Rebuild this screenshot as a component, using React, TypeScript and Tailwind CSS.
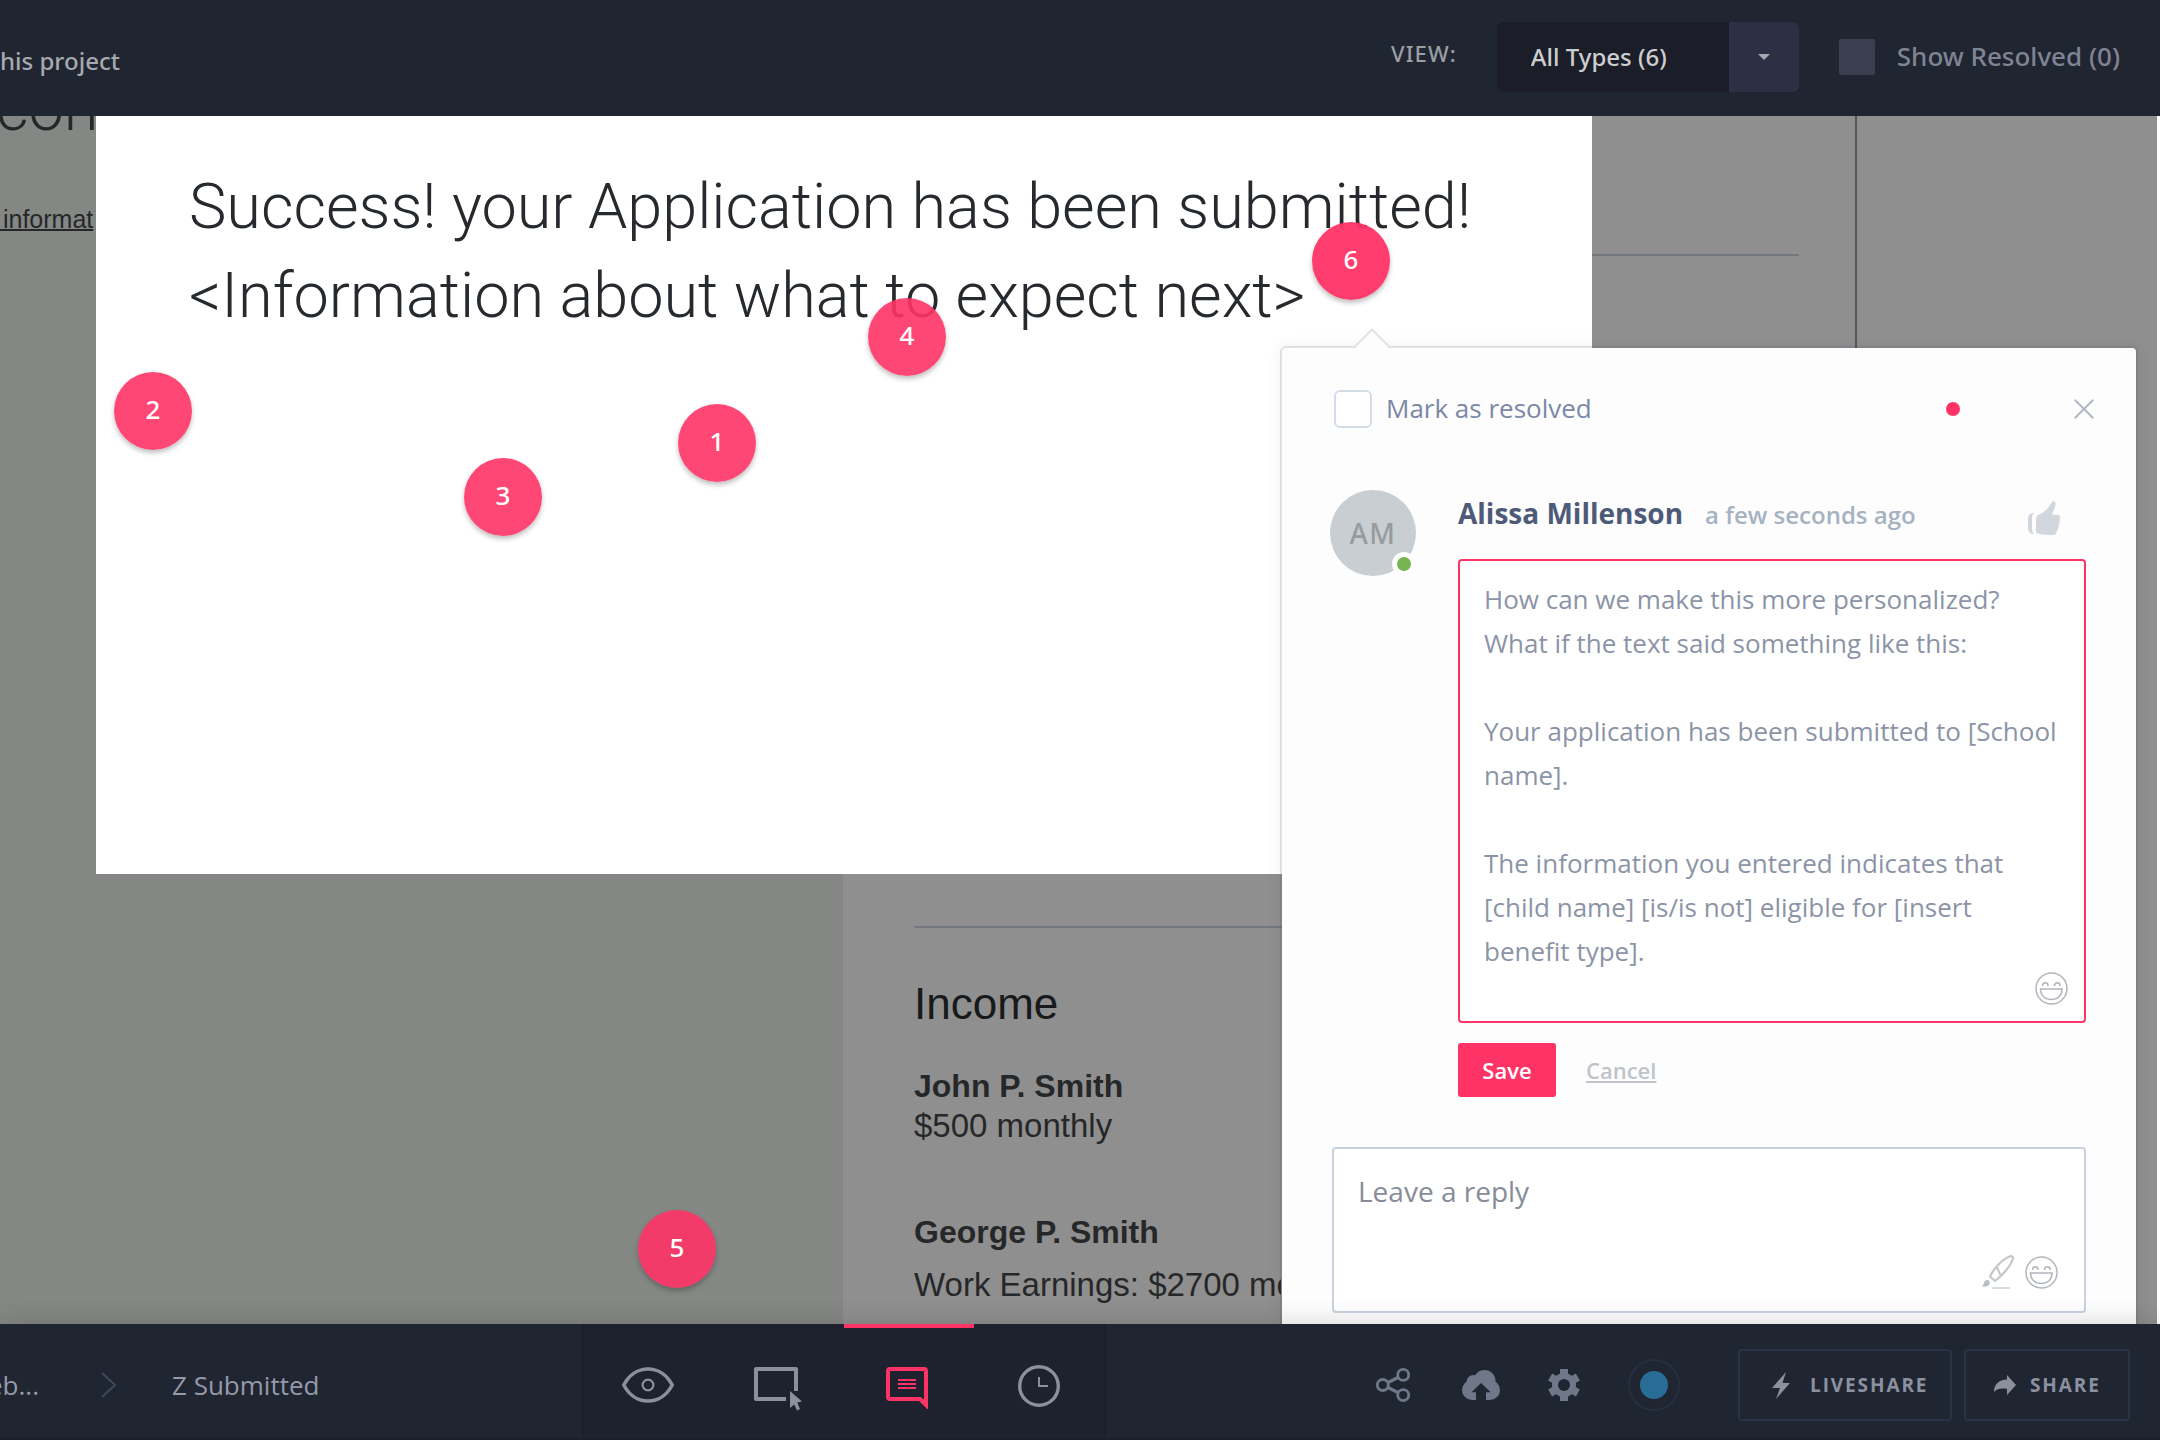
import React from "react";

const message = `How can we make this more personalized?
What if the text said something like this:

Your application has been submitted to [School name].

The information you entered indicates that [child name] [is/is not] eligible for [insert benefit type].`;

const pins = [
  { n: 1, place: "left-[678px] top-[288px]", tone: "bg-[#ff3366]/90" },
  { n: 2, place: "left-[114px] top-[256px]", tone: "bg-[#ff3366]/90" },
  { n: 3, place: "left-[464px] top-[342px]", tone: "bg-[#ff3366]/90" },
  { n: 4, place: "left-[868px] top-[182px]", tone: "bg-[#ff3366]/90" },
  { n: 5, place: "left-[638px] top-[1094px]", tone: "bg-[#ff3366]/90" },
  { n: 6, place: "left-[1312px] top-[106px]", tone: "bg-[#ff3366]/95" },
];

function Smile() {
  return (
    <svg width="33" height="33" viewBox="0 0 33 33" fill="none" stroke="#b1b6bd" strokeWidth="1.5" aria-hidden="true">
      <circle cx="16.5" cy="16.5" r="15.5" />
      <path d="M7.5 14c0-4.4 5.6-4.4 5.6 0M19.6 14c0-4.4 5.6-4.4 5.6 0" />
      <path d="M5.5 17h21.6c0 6.600-4.600 10.600-10.800 10.600S5.500 23.600 5.500 17Z" />
    </svg>
  );
}

function Brush() {
  return (
    <svg width="32" height="34" viewBox="0 0 32 34" fill="none" aria-hidden="true">
      <path d="M8 21.500C11.500 14 20 4.500 27.500 1.500c2.600-1 4 .4 3.200 3C28 12 19.500 21 13 26Z" stroke="#c3c7ca" strokeWidth="2.200" strokeLinejoin="round" />
      <path d="M15 12.500l3.500 7.500" stroke="#c3c7ca" strokeWidth="2" />
      <path d="M0 31.500c2-1.500 1.500-4.500 3.500-6 2.400-1.500 5 1 4.200 3.500C6.700 31.500 3 32.300 0 31.500Z" fill="#b9bfc3" />
      <path d="M10 33h18" stroke="#dadcde" strokeWidth="2" />
    </svg>
  );
}

function Header() {
  return (
    <header className="z-20 flex h-[116px] shrink-0 items-center justify-between bg-[#202532] pr-10 pb-[2px]">
      <p className="pt-2 font-['Noto_Sans',sans-serif] text-[24px] font-medium text-[#a6a9ae]">his project</p>
      <div className="flex items-center">
        <label htmlFor="types" className="pr-10 pb-2 font-['Noto_Sans',sans-serif] text-[22px] font-medium tracking-wider text-[#9b9ea3]">VIEW:</label>
        <div className="relative">
          <select
            id="types"
            className="h-[70px] w-[302px] appearance-none rounded-md bg-[#1b1e29] pr-[70px] pl-[34px] font-['Noto_Sans',sans-serif] text-[24px] font-medium text-[#cdced0]"
          >
            <option>All Types (6)</option>
          </select>
          <span className="pointer-events-none absolute inset-y-0 right-0 flex w-[70px] items-center justify-center rounded-r-md bg-[#2b3045]">
            <svg width="12" height="6" viewBox="0 0 12 6" aria-hidden="true"><path d="M0 0h12L6 6Z" fill="#a4a7ae" /></svg>
          </span>
        </div>
        <input id="resolved" type="checkbox" className="ml-10 size-9 appearance-none rounded-[2px] bg-[#3a4050]" />
        <label htmlFor="resolved" className="pb-0.5 pl-[22px] font-['Noto_Sans',sans-serif] text-[26px] font-medium text-[#7f8492]">Show Resolved (0)</label>
      </div>
    </header>
  );
}

function Backdrop() {
  return (
    <div className="absolute inset-0 flex font-['Liberation_Sans',Arial,sans-serif] text-[#262728]">
      <div className="w-[843px] shrink-0 overflow-hidden bg-[#858785]">
        <p className="-mt-[52px] -ml-1 font-['Roboto',sans-serif] text-[63px] leading-[89px] font-light">con</p>
        <div className="mt-[51px] -ml-[4px] w-[100px] overflow-hidden text-[25px] leading-[30px] whitespace-pre">
          <span className="underline decoration-2 underline-offset-1"> informat</span>
        </div>
      </div>
      <div className="mr-[3px] flex-1 overflow-hidden bg-[#8f8f8f]">
        <div className="flex h-full w-[1014px] flex-col border-r-2 border-[#555759] pr-14 pl-[71px]">
          <hr className="mt-[138px] border-t-2 border-[#72787d]" />
          <hr className="mt-[670px] border-t-2 border-[#72787d]" />
          <h2 className="mt-[51px] text-[44px] leading-[50px] text-[#17191a]">Income</h2>
          <h3 className="mt-[37px] text-[32px] leading-[40px] font-bold">John P. Smith</h3>
          <p className="text-[33px] leading-[40px]">$500 monthly</p>
          <h3 className="mt-[66px] text-[32px] leading-[40px] font-bold">George P. Smith</h3>
          <p className="mt-[13px] w-[367px] overflow-hidden text-[33px] leading-[40px] whitespace-nowrap">Work Earnings: $2700 mo</p>
        </div>
      </div>
    </div>
  );
}

function CommentPanel() {
  return (
    <section
      aria-label="Comment"
      className="absolute top-[230px] right-[22px] -bottom-2 flex w-[858px] flex-col rounded-md border-2 border-[#3c4664]/15 bg-[#fdfdfd] bg-clip-padding pt-[42px] pr-[50px] pl-[50px] shadow-[0_0_16px_rgba(0,0,0,0.06)]"
    >
      <svg className="absolute -top-[20px] left-[72px]" width="36" height="22" viewBox="0 0 36 22" aria-hidden="true">
        <path d="M0 21L18 2L36 21V22H0Z" fill="#fdfdfd" />
        <path d="M0 19.500L18 1.500L36 19.500" fill="none" stroke="#e2e3e8" strokeWidth="2" />
      </svg>

      <div className="-mr-[8px] ml-[2px] flex h-[38px] items-center">
        <input id="mark" type="checkbox" className="size-[38px] appearance-none rounded-md border-2 border-[#d3dde8] bg-white" />
        <label htmlFor="mark" className="ml-3.5 pb-0.5 text-[26px] text-[#7c88a8]">Mark as resolved</label>
        <span className="ml-auto size-[14px] rounded-full bg-[#ff3366]" />
        <button type="button" aria-label="Close" className="ml-[114px]">
          <svg width="20" height="20" viewBox="0 0 20 20" stroke="#b3b8c5" strokeWidth="2" aria-hidden="true">
            <path d="M.7 .7L19.300 19.300M19.300 .7L.7 19.300" />
          </svg>
        </button>
      </div>

      <div className="mt-[62px] -ml-[2px] flex gap-[42px]">
        <div className="relative flex size-[86px] shrink-0 items-center justify-center rounded-full bg-[#c9ced2] font-['Noto_Sans',sans-serif] text-[28px] font-medium tracking-wider text-[#969b9f]">
          AM
          <span className="absolute right-0 bottom-0 size-[24px] rounded-full border-5 border-[#fdfdfd] bg-[#77b550]" />
        </div>
        <div className="flex-1">
          <div className="flex items-baseline pt-[3px] leading-[40px]">
            <strong className="text-[28px] leading-[40px] font-bold text-[#4d5b79]">Alissa Millenson</strong>
            <span className="ml-[22px] text-[24px] font-semibold text-[#a5b2c2]">a few seconds ago</span>
            <button type="button" aria-label="Like" className="mr-[26px] ml-auto self-end">
              <svg width="32" height="34" viewBox="0 0 32 34" fill="#d2d7de" aria-hidden="true">
                <path d="M6 12C2 12 0 14 0 18v9c0 4 2 6 6 6-1.500-1.500-2-3.500-2-6v-9c0-3 .5-4.500 2-6Z" />
                <path d="M8 19c0-3.500 1-4.500 4-6C18 10 21 6 24 1c1-1.500 4-.8 3.500 2-.5 4-2 7-3.500 10.500 4 .3 7 .2 8 1.200 0 7.300-2 14.300-5 19.300h-5c-5.500 0-10.500-.7-14-2Z" />
              </svg>
            </button>
          </div>
          <div className="relative mt-[24px]">
            <textarea
              aria-label="Edit comment"
              defaultValue={message}
              className="block h-[464px] w-full resize-none overflow-hidden rounded-[4px] border-2 border-[#ff3366] bg-white px-6 py-4 text-[26px] leading-[44px] text-[#8b94a6]"
            />
            <button type="button" aria-label="Insert emoji" className="absolute right-[18px] bottom-[18px]"><Smile /></button>
          </div>
          <div className="mt-5 flex items-center">
            <button type="button" className="h-[54px] w-[98px] rounded-[3px] bg-[#ff3366] text-[22px] font-semibold text-white">Save</button>
            <button type="button" className="ml-[30px] text-[22px] font-semibold text-[#bfc3ca] underline decoration-2 underline-offset-2">Cancel</button>
          </div>
        </div>
      </div>

      <div className="relative mt-[50px]">
        <textarea
          aria-label="Leave a reply"
          placeholder="Leave a reply"
          className="block h-[166px] w-full resize-none rounded-[4px] border-2 border-[#c8d2de] bg-white px-6 py-[22px] text-[28px] leading-[40px] placeholder:text-[#868c98]"
        />
        <div className="absolute right-[28px] bottom-[24px] flex items-center gap-[11px]">
          <button type="button" aria-label="Sketch"><Brush /></button>
          <button type="button" aria-label="Insert emoji in reply"><Smile /></button>
        </div>
      </div>
    </section>
  );
}

function Footer() {
  return (
    <footer className="z-20 flex h-[116px] shrink-0 border-b-2 border-[#1a1f2b] bg-[#202532] shadow-[0_0_24px_rgba(0,0,0,0.16)]">
      <nav aria-label="Breadcrumb" className="flex w-[582px] shrink-0 items-center pt-2 text-[26px] text-[#959aa9]">
        <a href="#project" className="-ml-[12px]">eb...</a>
        <svg className="mr-[55px] ml-[62px]" width="16" height="26" viewBox="0 0 16 26" fill="none" stroke="#40465c" strokeWidth="2" aria-hidden="true">
          <path d="M1 1L14 13L1 25" />
        </svg>
        <a href="#screen">Z Submitted</a>
      </nav>

      <div className="grid w-[524px] shrink-0 grid-cols-4 border-x-2 border-[#1b1f2b] bg-[#1d222e]">
        <button type="button" aria-label="Preview mode" className="flex items-center justify-center pt-2 pr-0.5">
          <svg width="52" height="36" viewBox="0 0 52 36" fill="none" stroke="#8b909c" aria-hidden="true">
            <path d="M1.800 18C7 8 16 2 26 2s19 6 24.200 16C45 28 36 34 26 34S7 28 1.800 18Z" strokeWidth="3.600" />
            <circle cx="26" cy="18" r="5.400" strokeWidth="2.200" />
          </svg>
        </button>
        <button type="button" aria-label="Build mode" className="flex items-center justify-center pt-4 pr-0.5">
          <svg width="48" height="44" viewBox="0 0 48 44" aria-hidden="true">
            <path d="M42 24V2H2V32H32" fill="none" stroke="#8b909c" strokeWidth="4" strokeLinejoin="round" />
            <path d="M36 24L48 34.500L43.300 35.500L46 42L43 43.500L40.300 37.500L36 41Z" fill="#8b909c" />
          </svg>
        </button>
        <button type="button" aria-label="Comment mode" className="relative flex items-center justify-center pt-3.5 pr-1">
          <span className="absolute inset-x-0 top-0 h-1 bg-[#ff3366]" />
          <svg width="42" height="42" viewBox="0 0 42 42" aria-hidden="true">
            <path d="M4 2H38Q40 2 40 4V38L34 32H4Q2 32 2 30V4Q2 2 4 2Z" fill="none" stroke="#ff3366" strokeWidth="4" />
            <path d="M34 32H42V42Z" fill="#ff3366" />
            <path d="M12 13H30M12 17H30M12 21H30" stroke="#ff3366" strokeWidth="2" />
          </svg>
        </button>
        <button type="button" aria-label="History mode" className="flex items-center justify-center pt-2.5">
          <svg width="42" height="42" viewBox="0 0 42 42" fill="none" stroke="#8b909c" aria-hidden="true">
            <circle cx="21" cy="21" r="19.300" strokeWidth="3.400" />
            <path d="M21 12V21H30" strokeWidth="2" />
          </svg>
        </button>
      </div>

      <div className="flex flex-1 items-center justify-end pt-2 pr-[30px]">
        <button type="button" aria-label="Connections">
          <svg width="34" height="34" viewBox="0 0 34 34" fill="none" stroke="#707789" aria-hidden="true">
            <path d="M12 14.500L22 9.500M12 19.500L22 24.500" strokeWidth="3.200" />
            <g strokeWidth="2.800">
              <circle cx="6.800" cy="17" r="5.500" />
              <circle cx="27.200" cy="6.900" r="5.500" />
              <circle cx="27.200" cy="27.100" r="5.500" />
            </g>
          </svg>
        </button>
        <button type="button" aria-label="Upload" className="ml-[52px]">
          <svg width="38" height="30" viewBox="0 0 38 30" fill="#707789" aria-hidden="true">
            <circle cx="10" cy="20" r="10" />
            <circle cx="11.500" cy="12" r="7" />
            <circle cx="22.500" cy="11" r="11" />
            <circle cx="28" cy="20" r="10" />
            <path d="M10 12H28V30H10Z" />
            <path d="M19 13L28.700 22.300H24V30H14V22.300H9.500Z" fill="#202532" />
          </svg>
        </button>
        <button type="button" aria-label="Settings" className="ml-12">
          <svg width="32" height="32" viewBox="0 0 32 32" fill="#707789" aria-hidden="true">
            <path d="M12 0H20V32H12Z" />
            <path d="M12 0H20V32H12Z" transform="rotate(60 16 16)" />
            <path d="M12 0H20V32H12Z" transform="rotate(120 16 16)" />
            <circle cx="16" cy="16" r="12" />
            <circle cx="16" cy="16" r="6" fill="#202532" />
          </svg>
        </button>
        <button type="button" aria-label="Online people" className="ml-12 flex size-[52px] items-center justify-center rounded-full border-2 border-[#272e3e]">
          <span className="size-7 rounded-full bg-[#286d96]" />
        </button>
        <button type="button" className="ml-[58px] flex h-[72px] w-[214px] items-center rounded-[4px] border-2 border-[#2b3246] pl-8 text-[19px] font-bold tracking-widest text-[#8a919f]">
          <svg className="mr-5" width="18" height="27" viewBox="0 0 18 27" fill="#8b909c" aria-hidden="true">
            <path d="M14 0L0 16H8L4 27L18 11H10.500Z" />
          </svg>
          LIVESHARE
        </button>
        <button type="button" className="ml-3 flex h-[72px] w-[166px] items-center rounded-[4px] border-2 border-[#2b3246] pl-7 text-[19px] font-bold tracking-widest text-[#8a919f]">
          <svg className="mr-[14px]" width="22" height="20" viewBox="0 0 22 20" fill="#8b909c" aria-hidden="true">
            <path d="M22 10L13 0V4.500C5 5 0 9 0 17C3 13.500 7 12.800 13 13.800V20Z" />
          </svg>
          SHARE
        </button>
      </div>
    </footer>
  );
}

export default function App() {
  return (
    <div className="flex h-screen flex-col overflow-hidden bg-white font-['Open_Sans',sans-serif]">
      <Header />
      <main className="relative flex-1 overflow-hidden">
        <Backdrop />
        <div className="absolute top-0 left-[96px] h-[758px] w-[1496px] bg-white pt-[46px] pl-[93px]">
          <h1 className="font-['Roboto',sans-serif] text-[63px] leading-[89px] font-light whitespace-nowrap text-[#262a2e]">
            Success! your Application has been submitted!
            <br />
            &lt;Information about what to expect next&gt;
          </h1>
        </div>
        {pins.map((p) => (
          <button
            key={p.n}
            type="button"
            className={`absolute flex size-[78px] items-center justify-center rounded-full pb-1 font-['Noto_Sans',sans-serif] text-[26px] font-medium text-white shadow-[0_3px_5px_rgba(0,0,0,0.25)] ${p.place} ${p.tone}`}
          >
            {p.n}
          </button>
        ))}
        <CommentPanel />
      </main>
      <Footer />
    </div>
  );
}
